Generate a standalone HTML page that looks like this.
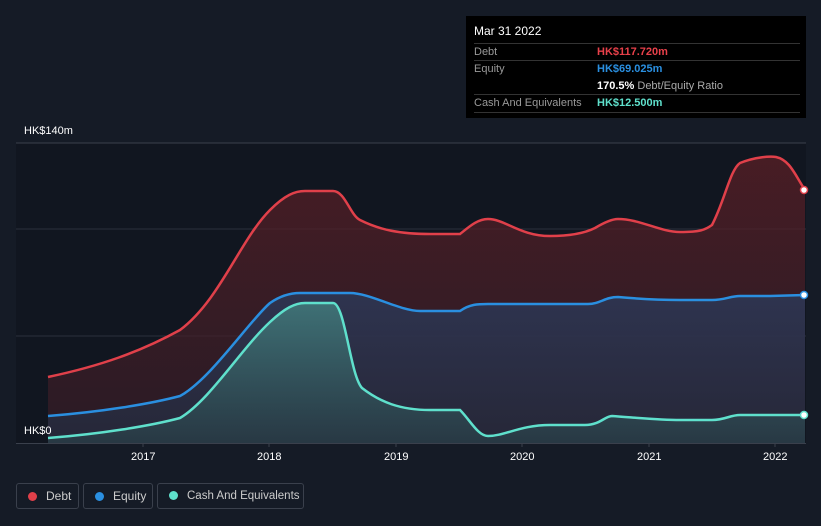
<!DOCTYPE html>
<html><head><style>
body{margin:0;width:821px;height:526px;background:#151b26;font-family:"Liberation Sans",sans-serif;overflow:hidden;position:relative}
.tt{position:absolute;left:466px;top:16px;width:340px;height:102px;background:#000;color:#fff;font-size:11px}
.row{position:absolute;left:8px;width:326px;border-top:1px solid #333}
.lbl{position:absolute;left:0;color:#999;white-space:nowrap}
.val{position:absolute;left:123px;font-weight:bold;white-space:nowrap}
.leg{position:absolute;top:483px;height:26px;border:1px solid #3a404c;border-radius:3px;color:#ccc;font-size:12px;line-height:24px;box-sizing:border-box;white-space:nowrap}
.dot{display:inline-block;width:9px;height:9px;border-radius:50%;margin:0 9px 0 11px;vertical-align:-1px}
.ax{position:absolute;color:#fff;font-size:11px}
</style></head><body>
<svg width="821" height="526" style="position:absolute;left:0;top:0">
<defs>
<linearGradient id="gd" x1="0" y1="0" x2="0" y2="1"><stop offset="0" stop-color="#5a1f26" stop-opacity=".75"/><stop offset="1" stop-color="#3a1e28" stop-opacity=".6"/></linearGradient>
<linearGradient id="ge" x1="0" y1="0" x2="0" y2="1"><stop offset="0" stop-color="#2c3a5a" stop-opacity=".8"/><stop offset="1" stop-color="#252a3c" stop-opacity=".8"/></linearGradient>
<linearGradient id="gc" x1="0" y1="0" x2="0" y2="1"><stop offset="0" stop-color="#4a9a90" stop-opacity=".6"/><stop offset="1" stop-color="#2a4a50" stop-opacity=".5"/></linearGradient>
</defs>
<rect x="16" y="143" width="790" height="300" fill="#111620"/>
<line x1="16" y1="143" x2="806" y2="143" stroke="#3a404c"/>
<line x1="16" y1="229" x2="806" y2="229" stroke="#2a303c"/>
<line x1="16" y1="336" x2="806" y2="336" stroke="#2a303c"/>
<path d="M48,377 C100,366 140,352 180,330 C220,300 240,240 270,210 C285,195 295,191 305,191 L333,191 C345,191 350,215 360,220 C380,230 400,234 430,234 L460,234 C470,226 478,219 488,219 C505,219 520,236 550,236 C570,236 585,233 595,228 C605,222 612,219 618,219 C640,219 660,232 680,232 C700,232 705,230 712,225 C725,200 730,170 740,163 C755,157 770,156 776,157 C790,160 795,175 805,190 L805,443 L48,443Z" fill="url(#gd)"/>
<path d="M48,416 C100,412 150,404 180,396 C210,380 250,320 270,303 C280,296 290,293 300,293 L350,293 C370,293 400,311 420,311 L460,311 C470,304 478,304 488,304 L588,304 C600,304 605,297 618,297 C640,299 660,300 680,300 L712,300 C725,300 730,296 740,296 L770,296 L805,295 L805,443 L48,443Z" fill="url(#ge)"/>
<path d="M48,438 C100,434 150,426 180,418 C210,400 240,350 270,322 C285,308 295,303 305,303 L333,303 C345,303 350,375 362,388 C380,402 400,410 430,410 L460,410 C470,420 478,436 488,436 C505,436 520,425 550,425 L585,425 C600,425 605,416 612,416 C640,418 660,420 680,420 L712,420 C725,420 730,415 740,415 L805,415 L805,443 L48,443Z" fill="url(#gc)"/>
<path d="M48,377 C100,366 140,352 180,330 C220,300 240,240 270,210 C285,195 295,191 305,191 L333,191 C345,191 350,215 360,220 C380,230 400,234 430,234 L460,234 C470,226 478,219 488,219 C505,219 520,236 550,236 C570,236 585,233 595,228 C605,222 612,219 618,219 C640,219 660,232 680,232 C700,232 705,230 712,225 C725,200 730,170 740,163 C755,157 770,156 776,157 C790,160 795,175 805,190" fill="none" stroke="#e0404a" stroke-width="2.5"/>
<path d="M48,416 C100,412 150,404 180,396 C210,380 250,320 270,303 C280,296 290,293 300,293 L350,293 C370,293 400,311 420,311 L460,311 C470,304 478,304 488,304 L588,304 C600,304 605,297 618,297 C640,299 660,300 680,300 L712,300 C725,300 730,296 740,296 L770,296 L805,295" fill="none" stroke="#2a8fe0" stroke-width="2.5"/>
<path d="M48,438 C100,434 150,426 180,418 C210,400 240,350 270,322 C285,308 295,303 305,303 L333,303 C345,303 350,375 362,388 C380,402 400,410 430,410 L460,410 C470,420 478,436 488,436 C505,436 520,425 550,425 L585,425 C600,425 605,416 612,416 C640,418 660,420 680,420 L712,420 C725,420 730,415 740,415 L805,415" fill="none" stroke="#5fe0cc" stroke-width="2.5"/>
<circle cx="804" cy="190" r="3.5" fill="#fff" stroke="#e0404a" stroke-width="1.5"/>
<circle cx="804" cy="295" r="3.5" fill="#fff" stroke="#2a8fe0" stroke-width="1.5"/>
<circle cx="804" cy="415" r="3.5" fill="#fff" stroke="#5fe0cc" stroke-width="1.5"/>
<line x1="16" y1="443.5" x2="806" y2="443.5" stroke="#3a404c"/>
<g stroke="#3a404c"><line x1="143" y1="443" x2="143" y2="447"/><line x1="269" y1="443" x2="269" y2="447"/><line x1="396" y1="443" x2="396" y2="447"/><line x1="522" y1="443" x2="522" y2="447"/><line x1="649" y1="443" x2="649" y2="447"/><line x1="775" y1="443" x2="775" y2="447"/></g>
</svg>
<div class="ax" style="left:24px;top:125px">HK$140m</div>
<div class="ax" style="left:24px;top:425px">HK$0</div>
<div class="ax" style="left:131px;top:451px">2017</div>
<div class="ax" style="left:257px;top:451px">2018</div>
<div class="ax" style="left:384px;top:451px">2019</div>
<div class="ax" style="left:510px;top:451px">2020</div>
<div class="ax" style="left:637px;top:451px">2021</div>
<div class="ax" style="left:763px;top:451px">2022</div>
<div class="tt">
<div style="position:absolute;left:8px;top:8px;font-size:12px">Mar 31 2022</div>
<div class="row" style="top:27px"><span class="lbl" style="top:2px">Debt</span><span class="val" style="color:#e8404a;top:2px">HK$117.720m</span></div>
<div class="row" style="top:44px"><span class="lbl" style="top:2px">Equity</span><span class="val" style="color:#2a8fe0;top:2px">HK$69.025m</span><span class="val" style="top:19px;color:#fff">170.5% <span style="color:#aaa;font-weight:normal">Debt/Equity Ratio</span></span></div>
<div class="row" style="top:78px"><span class="lbl" style="top:2px">Cash And Equivalents</span><span class="val" style="color:#5fe0cc;top:2px">HK$12.500m</span></div>
<div class="row" style="top:96px"></div>
</div>
<div class="leg" style="left:16px;width:63px"><span class="dot" style="background:#e0404a"></span>Debt</div>
<div class="leg" style="left:83px;width:70px"><span class="dot" style="background:#2a8fe0"></span>Equity</div>
<div class="leg" style="left:157px;width:147px;font-size:11.5px"><span class="dot" style="background:#5fe0cc"></span>Cash And Equivalents</div>
</body></html>
